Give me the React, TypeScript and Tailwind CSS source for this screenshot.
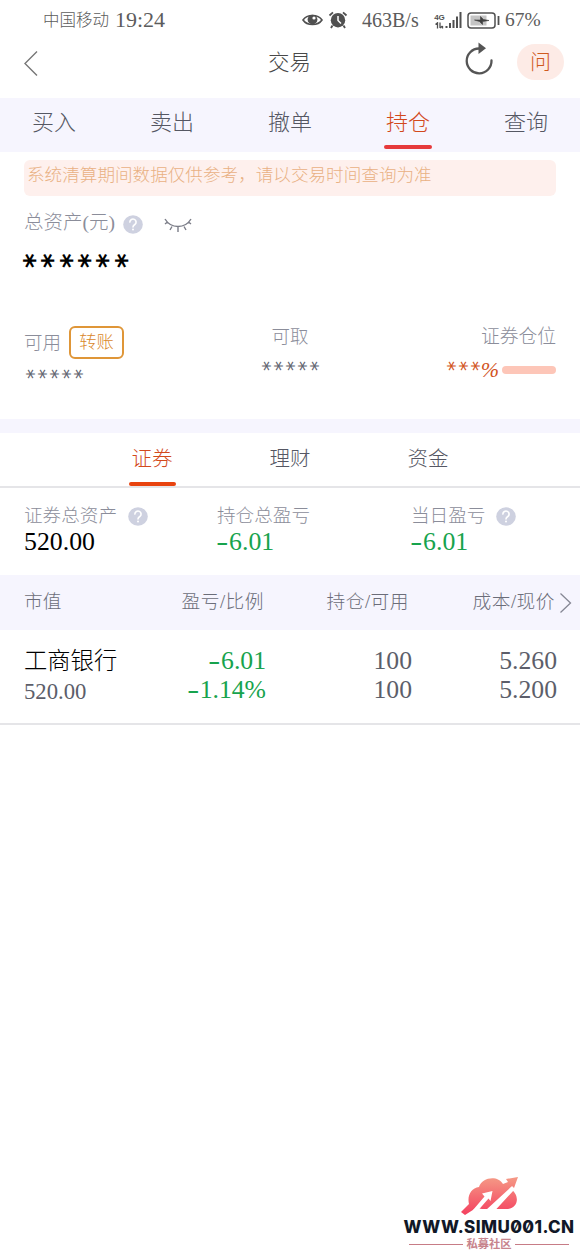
import type { ReactNode } from "react";

function Mask({ text, large }: { text: string; large?: boolean }) {
  return large ? (
    <span className="-ml-[5px] flex h-[18px] w-[108px] items-center justify-center">
      <span className="shrink-0 -rotate-90 font-['DejaVu_Sans',sans-serif] text-[28px] leading-[18px] font-bold tracking-[-14.6px] whitespace-nowrap [text-orientation:upright] [writing-mode:vertical-rl]">{text}</span>
    </span>
  ) : (
    <span className={`mr-[3px] -ml-[3px] flex h-3 items-center justify-center ${text.length === 3 ? "w-9" : "w-[60px]"}`}>
      <span className="shrink-0 -rotate-90 font-['DejaVu_Sans',sans-serif] text-[20px] leading-3 font-normal tracking-[-12px] whitespace-nowrap [text-orientation:upright] [writing-mode:vertical-rl]">{text}</span>
    </span>
  );
}

function Help() {
  return (
    <svg width="20" height="19" viewBox="0 0 20 19" className="shrink-0">
      <ellipse cx="10" cy="9.5" rx="9.8" ry="9.2" fill="#ced1e0" />
      <path d="M6.9 7.1a3.1 3 0 1 1 4.9 2.4C10.500 10.300 10 10.700 10 12" fill="none" stroke="#fff" strokeWidth="1.6" strokeLinecap="round" />
      <circle cx="10" cy="14.400" r="1" fill="#fff" />
    </svg>
  );
}

function StatusBar() {
  return (
    <div className="flex h-10 items-center pl-[43px] text-[#5c5c5c]">
      <span className="w-[72px] pt-px text-[16.5px] leading-10">中国移动</span>
      <span className="w-[187px] text-[22px] leading-10">19:24</span>
      <svg width="21" height="16" viewBox="0 0 21 16" className="shrink-0">
        <path d="M1 8C5 2 16 2 20 8C16 14 5 14 1 8Z" fill="none" stroke="#505050" strokeWidth="1.6" />
        <circle cx="10.500" cy="7.600" r="4.900" fill="#505050" />
        <circle cx="12" cy="6" r="1.600" fill="#fff" />
      </svg>
      <svg width="20" height="18" viewBox="0 0 20 18" className="ml-[5px] shrink-0">
        <circle cx="10" cy="9.200" r="7.200" fill="#505050" />
        <path d="M1.500 4.500L5 1.300M18.500 4.500L15 1.300M4.500 14.500L3 17M15.500 14.500L17 17" stroke="#505050" strokeWidth="1.800" />
        <path d="M10 5v4.500l3 3" fill="none" stroke="#fff" strokeWidth="1.500" />
      </svg>
      <span className="ml-[14px] w-[72px] text-[20px] leading-10">463B/s</span>
      <div className="flex w-[28px] items-end">
        <div className="flex w-[11px] flex-col items-center">
          <span className="font-['Liberation_Sans',sans-serif] text-[8px] leading-[9px] font-bold text-[#505050]">4G</span>
          <svg width="9" height="7" viewBox="0 0 9 7">
            <path d="M.5 2.500L2.500.8V6.500M5 .5V6M5 6L7.500 4M7.500 4V6.500" fill="none" stroke="#505050" strokeWidth="1.300" />
          </svg>
        </div>
        <svg width="17" height="17" viewBox="0 0 17 17">
          <path d="M1.500 16v-2M5 16v-5M8.500 16V8M12 16V4.500M15.500 16V0" stroke="#505050" strokeWidth="2" />
        </svg>
      </div>
      <svg width="33" height="17" viewBox="0 0 33 17" className="ml-[5px] shrink-0">
        <rect x="1" y="1" width="27" height="15" rx="3" fill="#fff" stroke="#505050" strokeWidth="1.500" />
        <rect x="3.500" y="3.500" width="16" height="10" fill="#c4c4c4" />
        <path d="M7.500 8L13.500 8V4.500L16.500 7.500L22 8.500L15.500 9.500V12.500L12.500 9.500Z" fill="#404040" stroke="#404040" strokeWidth=".6" />
        <path d="M31.500 4v9" stroke="#505050" strokeWidth="1.800" />
      </svg>
      <span className="ml-[5px] text-[19.5px] leading-10">67%</span>
    </div>
  );
}

function Header() {
  return (
    <div className="flex h-[58px] items-start">
      <svg width="16" height="28" viewBox="0 0 16 28" className="mt-[9px] ml-[23px]">
        <path d="M14 2.500L2 14.500L14 26.500" fill="none" stroke="#777" strokeWidth="1.400" />
      </svg>
      <h1 className="ml-[229px] w-[197px] text-[21.5px] leading-[47px] text-[#484848]">交易</h1>
      <svg width="30" height="34" viewBox="0 0 30 34" className="mt-[1px]">
        <path d="M14 7.500A12.400 12.400 0 1 0 26.500 19.500" fill="none" stroke="#555" strokeWidth="2.300" strokeLinecap="round" />
        <path d="M13.500 1.500V13L21 7.200Z" fill="#555" />
      </svg>
      <button className="mt-[4px] ml-[22px] h-9 w-[47px] rounded-full bg-[#fdebe6] text-[21px] leading-[35px] text-[#d05a1e]">问</button>
    </div>
  );
}

function TopTab({ label, active }: { label: string; active?: boolean }) {
  return (
    <div className={`flex h-[54px] w-11 flex-col items-center text-[22px] leading-[50px] ${active ? "text-[#d2491c]" : "text-[#555763]"}`}>
      <span className="h-[47px] whitespace-nowrap">{label}</span>
      {active && <span className="h-1 w-12 shrink-0 rounded-full bg-[#e63a3c]" />}
    </div>
  );
}

function SubTab({ label, active }: { label: string; active?: boolean }) {
  return (
    <div className={`flex w-[138px] flex-col items-center text-[20.5px] leading-[52px] ${active ? "text-[#d2491c]" : "text-[#555763]"}`}>
      <span className="h-[49px]">{label}</span>
      {active && <span className="h-1 w-[47px] rounded-full bg-[#e8430f]" />}
    </div>
  );
}

function Amount({ value }: { value: string }) {
  return value[0] === "-" ? (
    <>
      <span className="mr-[2.500px] ml-[1px] inline-block scale-x-140">-</span>
      {value.slice(1)}
    </>
  ) : (
    <>{value}</>
  );
}

function Summary({ label, value, help, className }: { label: string; value: string; help?: boolean; className: string }) {
  return (
    <div className={className}>
      <div className="flex h-[29px] items-center gap-[11px] text-[18.6px] leading-[26px] text-[#8b8d9a]">
        <span>{label}</span>
        {help && <span className="mt-[2px] flex"><Help /></span>}
      </div>
      <div className={`text-[25.8px] leading-[24px] ${value[0] !== "-" ? "text-black" : "text-[#17a34d]"}`}><Amount value={value} /></div>
    </div>
  );
}

function Cell({ children, className }: { children: ReactNode; className: string }) {
  return <div className={`text-right ${className}`}>{children}</div>;
}

function Watermark() {
  return (
    <div className="mt-auto mr-[6px] mb-[6px] flex w-[170px] flex-col items-center self-end">
      <svg width="60" height="42" viewBox="0 0 60 42" className="ml-[2px]">
        <defs>
          <linearGradient id="cloud" x1="0" y1="0" x2="0" y2="1">
            <stop offset="0" stopColor="#f59a86" />
            <stop offset="1" stopColor="#f4405f" />
          </linearGradient>
        </defs>
        <path d="M1 36L9 28C7 20 11 12 19 11C22 1 38-1 43 8L48 6L46 3L58 1L54 12L52 10L50 13C59 17 60 31 48 33H38L22 33L16 32L5 39Z" fill="url(#cloud)" />
        <path d="M13 34L24.500 20.500L22 17.500L32.500 15L30.500 25L28.500 22.500L18.500 34ZM26 34L51.500 10.500L54 14L35.500 34Z" fill="#fff" />
      </svg>
      <div className="font-['Inter',sans-serif] text-[17px] leading-[19px] font-extrabold tracking-[0.4px] whitespace-nowrap slashed-zero text-[#111827]">WWW.SIMU001.CN</div>
      <div className="flex h-[14px] w-[160px] items-center gap-[3px]">
        <span className="h-px flex-1 bg-[#c77c86]" />
        <span className="text-[11.3px] leading-[14px] font-bold text-[#c7848d]">私募社区</span>
        <span className="h-px flex-1 bg-[#c77c86]" />
      </div>
    </div>
  );
}

export default function App() {
  return (
    <div className="flex h-[1257px] w-[580px] flex-col overflow-hidden bg-white font-['Liberation_Serif','Noto_Sans_CJK_SC',serif] font-light">
      <StatusBar />
      <Header />
      <nav className="flex h-[54px] shrink-0 justify-between bg-[#f6f5fe] px-8">
        <TopTab label="买入" />
        <TopTab label="卖出" />
        <TopTab label="撤单" />
        <TopTab label="持仓" active />
        <TopTab label="查询" />
      </nav>

      <div className="mx-6 mt-2 h-9 shrink-0 rounded-md bg-[#fef0ed] pl-[3px] text-[17.6px] leading-[31px] text-[#e9b184]">系统清算期间数据仅供参考，请以交易时间查询为准</div>

      <section className="h-[223px] shrink-0 px-6 pt-[11px] text-[#8b8d9a]">
        <div className="flex h-8 items-center">
          <span className="w-[99px] text-[19.5px] leading-[26px] whitespace-nowrap">总资产(元)</span>
          <span className="mt-[3px] flex"><Help /></span>
          <svg width="30" height="16" viewBox="0 0 30 16" className="mt-[3px] ml-[20px]">
            <path d="M2 2C8 12 22 12 28 2M2 7L4.500 5M28 7L25.500 5M9 9.500L7 13M15 10V15M21 9.500L23 13" fill="none" stroke="#7b7d88" strokeWidth="1.400" />
          </svg>
        </div>
        <div className="flex h-[81px] items-start pt-[13px] text-black"><Mask text="******" large /></div>
        <div className="flex justify-between">
          <div className="w-[120px]">
            <div className="flex h-[44px] items-center pt-px text-[18.500px]">
              <span className="w-[45px] leading-[26px]">可用</span>
              <button className="h-[33px] w-[55px] rounded-md border-2 border-[#df9638] text-[17.3px] leading-[27px] text-[#d9872b]">转账</button>
            </div>
            <div className="flex pt-[4px] text-[#626470]"><Mask text="*****" /></div>
          </div>
          <div className="flex w-[120px] flex-col items-center">
            <span className="h-[40px] text-[18.500px] leading-[34px]">可取</span>
            <span className="flex text-[#626470]"><Mask text="*****" /></span>
          </div>
          <div className="flex w-[120px] flex-col items-end">
            <span className="h-[40px] text-[18.800px] leading-[34px]">证券仓位</span>
            <div className="flex h-5 items-start text-[#d2541e]">
              <Mask text="***" />
              <span className="text-[22px] leading-5 italic">%</span>
              <span className="mt-[6px] ml-[3px] h-2 w-[54px] rounded-full bg-[#fdc6b8]" />
            </div>
          </div>
        </div>
      </section>

      <div className="h-[14px] shrink-0 bg-[#f6f5fe]" />
      <div className="flex h-[55px] shrink-0 justify-center border-b-2 border-[#e5e5e8]">
        <SubTab label="证券" active />
        <SubTab label="理财" />
        <SubTab label="资金" />
      </div>

      <div className="flex h-[87px] shrink-0 pt-[13px] pl-6">
        <Summary label="证券总资产" value="520.00" help className="w-[193px]" />
        <Summary label="持仓总盈亏" value="-6.01" className="w-[194px]" />
        <Summary label="当日盈亏" value="-6.01" help className="w-[160px]" />
      </div>

      <div className="flex h-[55px] shrink-0 bg-[#f6f5fe] pl-6 text-[18.700px] leading-[53px] text-[#6b6d79]">
        <div className="w-[120px]">市值</div>
        <Cell className="w-[120px] tracking-[0.5px]">盈亏/比例</Cell>
        <Cell className="w-[145px] tracking-[0.5px]">持仓/可用</Cell>
        <Cell className="w-[146px] tracking-[0.5px]">成本/现价</Cell>
        <svg width="13" height="22" viewBox="0 0 13 22" className="mt-[17px] ml-[4px]">
          <path d="M1.500 1.500L11.500 11L1.500 20.500" fill="none" stroke="#858794" strokeWidth="1.300" />
        </svg>
      </div>

      <div className="flex h-[95px] shrink-0 border-b-2 border-[#e5e5e8] pt-4 pl-6 text-[25.700px] leading-[29px] text-[#5c5e6a]">
        <div className="w-[120px]">
          <div className="text-[23.300px] leading-[31px] text-black">工商银行</div>
          <div className="text-[22.700px] leading-[29px]">520.00</div>
        </div>
        <Cell className="w-[122px] text-[#17a34d]">
          <div><Amount value="-6.01" /></div>
          <div><Amount value="-1.14%" /></div>
        </Cell>
        <Cell className="w-[146px]">
          <div>100</div>
          <div>100</div>
        </Cell>
        <Cell className="w-[145px]">
          <div>5.260</div>
          <div>5.200</div>
        </Cell>
      </div>

      <Watermark />
    </div>
  );
}
